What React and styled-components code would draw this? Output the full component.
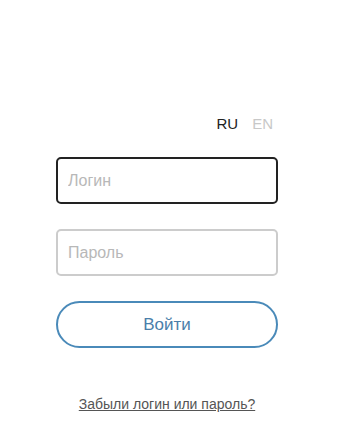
import React, { useState } from 'react';
import styled, { createGlobalStyle } from 'styled-components';

const colors = {
  text: '#222222',
  muted: '#c8c8c8',
  placeholder: '#b8b8b8',
  accent: '#4a8ab9',
  accentText: '#4a7ea9',
  link: '#555555',
};

const GlobalStyle = createGlobalStyle`
  body {
    margin: 0;
    background: #ffffff;
    font-family: "Liberation Sans", Arial, sans-serif;
  }
`;

const Page = styled.div`
  display: flex;
  justify-content: flex-start;
  padding: 114px 0 0 56px;
  min-height: 100vh;
  box-sizing: border-box;
`;

const Form = styled.form`
  display: flex;
  flex-direction: column;
  width: 222px;
`;

const LangRow = styled.div`
  display: flex;
  justify-content: flex-end;
  gap: 14px;
  height: 20px;
  margin-bottom: 23px;
  padding-right: 5px;
`;

const Lang = styled.span`
  font-size: 15px;
  line-height: 20px;
  color: ${(p) => (p.active ? colors.text : colors.muted)};
  cursor: pointer;
`;

const Input = styled.input`
  height: 47px;
  width: 100%;
  box-sizing: border-box;
  border: 2px solid ${(p) => (p.focused ? colors.text : '#cccccc')};
  border-radius: 5px;
  padding: 0 10px;
  font-family: "Liberation Sans", Arial, sans-serif;
  font-size: 16px;
  color: ${colors.text};
  outline: none;
  margin-bottom: 25px;
  caret-color: ${colors.text};

  &::placeholder {
    color: ${colors.placeholder};
  }
`;

const Button = styled.button`
  height: 47px;
  width: 100%;
  border: 2px solid ${colors.accent};
  border-radius: 24px;
  background: #ffffff;
  color: ${colors.accentText};
  font-family: "Liberation Sans", Arial, sans-serif;
  font-size: 17px;
  cursor: pointer;
`;

const Forgot = styled.a`
  align-self: center;
  margin-top: 48px;
  font-size: 14px;
  line-height: 17px;
  color: ${colors.link};
  text-decoration: underline;
  cursor: pointer;
`;

export default function App() {
  const [lang, setLang] = useState('RU');
  const [form, setForm] = useState({ login: '', password: '' });

  const handleChange = (e) => {
    const { name, value } = e.target;
    setForm({ ...form, [name]: value });
  };

  return (
    <>
      <GlobalStyle />
      <Page>
        <Form onSubmit={(e) => e.preventDefault()}>
          <LangRow>
            <Lang active={lang === 'RU'} onClick={() => setLang('RU')}>RU</Lang>
            <Lang active={lang === 'EN'} onClick={() => setLang('EN')}>EN</Lang>
          </LangRow>
          <Input
            focused
            name="login"
            placeholder="Логин"
            value={form.login}
            onChange={handleChange}
            autoFocus
          />
          <Input
            type="password"
            name="password"
            placeholder="Пароль"
            value={form.password}
            onChange={handleChange}
          />
          <Button type="submit">Войти</Button>
          <Forgot>Забыли логин или пароль?</Forgot>
        </Form>
      </Page>
    </>
  );
}
